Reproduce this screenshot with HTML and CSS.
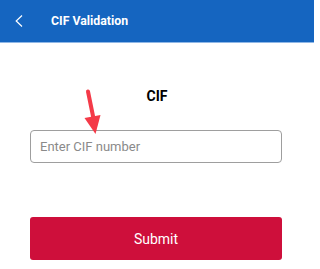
FILE: index.html
```html
<!DOCTYPE html>
<html>
<head>
<meta charset="utf-8">
<link rel="stylesheet" href="styles.css">
</head>
<body>
<div class="header">
  <svg class="back" width="10" height="14" viewBox="0 0 10 14"><path d="M8 1.5 L2.2 7 L8 12.5" fill="none" stroke="#fff" stroke-width="1.2"/></svg>
  <span class="title">CIF Validation</span>
</div>
<div class="content">
  <div class="label">CIF</div>
  <div class="field">
    <input class="input" type="text" placeholder="Enter CIF number">
    <svg class="arrow" width="24" height="48" viewBox="0 0 24 48"><path d="M8 3.5 L14 33" stroke="#f43a48" stroke-width="4" stroke-linecap="round" fill="none"/><polygon points="4.5,30 20.5,27 15.5,46" fill="#f43a48"/></svg>
  </div>
  <button class="submit">Submit</button>
</div>
</body>
</html>
```
FILE: styles.css
```css
html, body { margin: 0; padding: 0; background: #fff; }
body { font-family: Roboto, "Noto Sans", sans-serif; width: 314px; height: 269px; overflow: hidden; }
.header {
  background: #1565c0;
  border-bottom: 1px solid #8fb7e6;
  display: flex;
  align-items: center;
  box-sizing: border-box;
  height: 43px;
}
.back { margin-left: 14px; margin-right: 27px; }
.title { color: #fff; font-weight: bold; font-size: 12.3px; }
.content { padding: 0 32px 0 30px; }
.label { text-align: center; font-weight: bold; font-size: 14px; color: #000; margin-top: 45px; line-height: 17px; padding-left: 2px; }
.field { position: relative; margin-top: 25px; }
.input {
  display: block;
  box-sizing: border-box;
  width: 252px;
  height: 33px;
  border: 1px solid #9e9e9e;
  border-radius: 4px;
  padding: 0 9px;
  font-family: Roboto, sans-serif;
  font-size: 13px;
  color: #333;
  outline: none;
}
.input::placeholder { color: #8a8a8a; }
.arrow { position: absolute; left: 50px; top: -42px; }
.submit {
  display: block;
  margin-top: 54px;
  width: 252px;
  height: 43px;
  border: none;
  border-radius: 3px;
  background: #ce0f3b;
  color: #fff;
  font-family: Roboto, sans-serif;
  font-size: 14px;
}
```
